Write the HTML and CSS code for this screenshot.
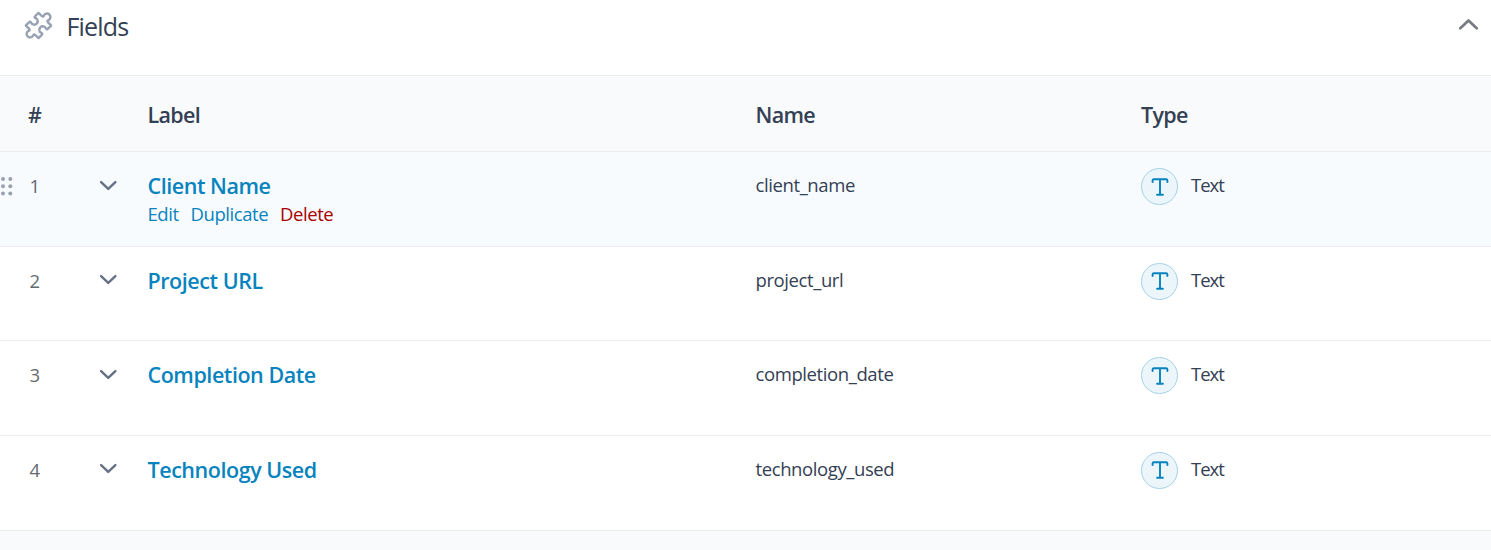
FILE: index.html
```
<!DOCTYPE html>
<html lang="en">
<head>
<meta charset="utf-8">
<title>Fields</title>
<link rel="stylesheet" href="styles.css">
</head>
<body>
<svg class="sprite" aria-hidden="true">
  <symbol id="chevron" viewBox="0 0 20 12"><path d="M2.2 2.2 10 9.7 17.8 2.2" fill="none" stroke="currentColor" stroke-width="2.6" stroke-linecap="round" stroke-linejoin="round"/></symbol>
  <symbol id="type-text" viewBox="0 0 18 20"><path d="M1.6 5.1V3.5Q1.6 2.2 2.9 2.2H15.1Q16.4 2.2 16.4 3.5V5.1M9 2.2V17.7M6.1 17.7H11.9" fill="none" stroke="currentColor" stroke-width="1.9" stroke-linecap="round" stroke-linejoin="round"/></symbol>
</svg>
<header class="panel-head">
  <svg class="puzzle" viewBox="-15 -15 30 30"><path transform="rotate(45)" d="M-8.9-9.3H-4.6C-3-9.3-2.8-10-3.4-11.2A3.6 3.6 0 1 1 3.4-11.2C2.8-10 3-9.3 4.6-9.3H8.9Q9.3-9.3 9.3-8.9V-4.6C9.3-3 8.6-2.8 7.4-3.4A3.6 3.6 0 1 0 7.4 3.4C8.6 2.8 9.3 3 9.3 4.6V8.9Q9.3 9.3 8.9 9.3H4.6C3 9.3 2.8 10 3.4 11.2A3.6 3.6 0 1 1-3.4 11.2C-2.8 10-3 9.3-4.6 9.3H-8.9Q-9.3 9.3-9.3 8.9V4.6C-9.3 3-8.6 2.8-7.4 3.4A3.6 3.6 0 1 0-7.4-3.4C-8.6-2.8-9.3-3-9.3-4.6V-8.9Q-9.3-9.3-8.9-9.3Z"/></svg>
  <h2 class="title">Fields</h2>
  <svg class="collapse"><use href="#chevron"/></svg>
</header>
<div class="row thead"><span class="hash">#</span><span></span><span class="h-label">Label</span><span class="h-name">Name</span><span class="h-type">Type</span></div>
<div class="row field active">
  <div class="order"><svg class="grip" viewBox="0 0 14 20"><circle cx="3" cy="3" r="2"/><circle cx="10.3" cy="3" r="2"/><circle cx="3" cy="10.3" r="2"/><circle cx="10.3" cy="10.3" r="2"/><circle cx="3" cy="17.6" r="2"/><circle cx="10.3" cy="17.6" r="2"/></svg><span class="num">1</span></div>
  <svg class="toggle"><use href="#chevron"/></svg>
  <div><a class="label">Client Name</a><div class="actions"><a class="edit">Edit</a><a class="duplicate">Duplicate</a><a class="delete">Delete</a></div></div>
  <span class="name">client_name</span>
  <div class="type"><span class="badge"><svg><use href="#type-text"/></svg></span><span class="kind">Text</span></div>
</div>
<div class="row field">
  <div class="order"><span class="num">2</span></div>
  <svg class="toggle"><use href="#chevron"/></svg>
  <div><a class="label">Project URL</a></div>
  <span class="name">project_url</span>
  <div class="type"><span class="badge"><svg><use href="#type-text"/></svg></span><span class="kind">Text</span></div>
</div>
<div class="row field">
  <div class="order"><span class="num">3</span></div>
  <svg class="toggle"><use href="#chevron"/></svg>
  <div><a class="label">Completion Date</a></div>
  <span class="name">completion_date</span>
  <div class="type"><span class="badge"><svg><use href="#type-text"/></svg></span><span class="kind">Text</span></div>
</div>
<div class="row field">
  <div class="order"><span class="num">4</span></div>
  <svg class="toggle"><use href="#chevron"/></svg>
  <div><a class="label">Technology Used</a></div>
  <span class="name">technology_used</span>
  <div class="type"><span class="badge"><svg><use href="#type-text"/></svg></span><span class="kind">Text</span></div>
</div>
</body>
</html>
```
FILE: styles.css
```
* { box-sizing: border-box; }
body { margin: 0; height: 550px; overflow: hidden; background: #f9fafb; color: #344054; font-family: "Segoe UI", "Open Sans", "Noto Sans", sans-serif; }
.sprite { display: none; }
.panel-head { display: flex; align-items: flex-start; height: 76px; padding: 9px 12px 0 23px; background: #fff; border-bottom: 1px solid #eaecf0; }
.puzzle { width: 29px; height: 29px; margin: 2px 13.5px 0 1px; overflow: visible; }
.puzzle path { fill: none; stroke: #98a2b3; stroke-width: 2.5; stroke-linejoin: round; }
.title { margin: 0; font-size: 25px; font-weight: 400; line-height: 34px; letter-spacing: -0.8px; }
.collapse { width: 21px; height: 12.6px; margin: 9px 0 0 auto; color: #787c82; transform: rotate(180deg); }
.row { display: grid; grid-template-columns: 99px 48.5px 608px 385.5px 1fr; border-bottom: 1px solid #eaecf0; }
.thead { height: 76px; font-size: 21.5px; font-weight: 600; line-height: 78px; letter-spacing: -0.65px; }
.hash { padding-left: 28px; }
.field { height: 94.67px; padding-top: 15px; background: #fff; }
.active { background: #f7fbfe; }
.order { display: flex; height: 37px; line-height: 37px; color: #646970; font-size: 18.5px; }
.grip { width: 14px; height: 20px; margin-top: 9px; margin-right: -14px; fill: #98a2b3; }
.num { padding-left: 29.5px; }
.toggle { width: 18.5px; height: 11px; margin-top: 12.5px; color: #667085; }
.label { display: block; font-size: 21.5px; font-weight: 600; line-height: 37px; letter-spacing: -0.45px; color: #0783be; }
.actions { display: flex; gap: 12px; margin-top: -3px; font-size: 18.5px; line-height: 26px; letter-spacing: -0.45px; color: #0783be; }
.delete { color: #a00; }
.name { font-size: 18.5px; line-height: 35px; letter-spacing: -0.4px; }
.type { display: flex; gap: 13px; }
.badge { display: flex; align-items: center; justify-content: center; width: 37px; height: 37px; margin-top: 1px; border: 1px solid #a5d2e7; border-radius: 50%; background: #ebf5fa; color: #0783be; }
.badge svg { width: 18px; height: 20px; }
.kind { font-size: 18.5px; line-height: 35px; letter-spacing: -1px; }
```
